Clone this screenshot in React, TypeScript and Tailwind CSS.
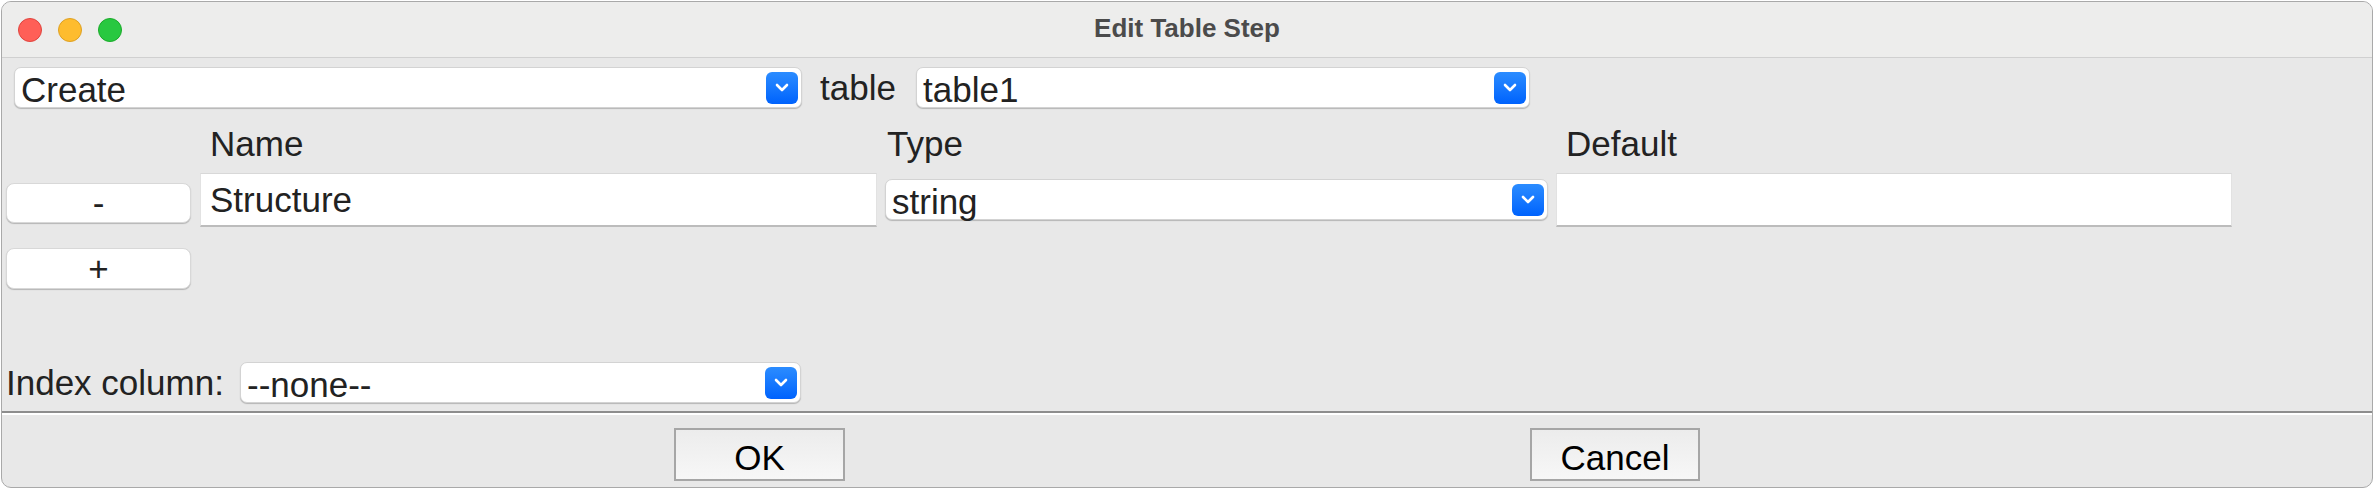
import React from "react";

function Chevron() {
    return (
        <svg width="14" height="9" viewBox="0 0 14 9" fill="none">
            <path d="M2 2l5 5 5-5" stroke="white" strokeWidth="2.6" strokeLinecap="round" strokeLinejoin="round" />
        </svg>
    )
}

function Select({ value, className }: { value: string; className: string }) {
    return (
        <div className={`flex h-[41px] shrink-0 items-center justify-between rounded-[7px] border border-[#d3d3d3] bg-white pl-[6px] pr-[3px] shadow-[0_1px_1px_rgba(0,0,0,0.22)] ${className}`}>
            <span className="pt-[4px] leading-[37px]">{value}</span>
            <span className="flex h-[32px] w-[32px] items-center justify-center rounded-[6px] bg-linear-to-b from-[#2b8cff] to-[#0062fd]">
                <Chevron />
            </span>
        </div>
    )
}

function TextField({ value, className }: { value?: string; className: string }) {
    return (
        <div className={`h-[54px] shrink-0 border-x border-t border-b-2 border-x-[#e2e2e2] border-t-[#d8d8d8] border-b-[#bcbcbc] bg-white pl-[9px] leading-[51px] ${className}`}>
            {value}
        </div>
    )
}

function SmallButton({ label, className }: { label: string; className: string }) {
    return (
        <div className={`flex w-[185px] shrink-0 items-center justify-center rounded-[8px] border border-[#d8d8d8] bg-white shadow-[0_1px_1px_rgba(0,0,0,0.22)] leading-[38px] ${className}`}>
            {label}
        </div>
    )
}

function DialogButton({ label, className }: { label: string; className: string }) {
    return (
        <div className={`h-[53px] shrink-0 border-2 border-[#a6a6a6] bg-linear-to-b from-[#ececec] to-[#f7f7f7] pt-[6px] text-center leading-[43px] text-black ${className}`}>
            {label}
        </div>
    )
}

export default function App() {
    return (
        <div className="h-[488px] w-[2376px] bg-white pl-px pt-px font-['Liberation_Sans',Arial,sans-serif] text-[35px] text-[#222222]">
            <div className="flex h-[487px] w-[2372px] flex-col overflow-hidden rounded-[10px] border border-[#a9a9a9] bg-[#e8e8e8]">

                {/* title bar */}
                <div className="grid h-[56px] shrink-0 grid-cols-[1fr_auto_1fr] items-center border-b border-[#d0d0d0] bg-[#ededec] px-[16px]">
                    <div className="flex gap-[16px]">
                        <span className="h-[24px] w-[24px] rounded-full border border-[#e0443e] bg-[#ff5f57]" />
                        <span className="h-[24px] w-[24px] rounded-full border border-[#dea123] bg-[#febc2e]" />
                        <span className="h-[24px] w-[24px] rounded-full border border-[#1aab29] bg-[#28c840]" />
                    </div>
                    <div className="pb-[2px] text-[26px] font-bold text-[#4b4b4b]">Edit Table Step</div>
                    <div />
                </div>

                {/* operation + table */}
                <div className="mt-[9px] flex items-center pl-[12px]">
                    <Select value="Create" className="w-[788px]" />
                    <span className="ml-[18px] w-[96px] shrink-0 leading-[40px]">table</span>
                    <Select value="table1" className="w-[614px]" />
                </div>

                {/* column headers */}
                <div className="mt-[16px] flex h-[40px] pl-[4px] leading-[40px]">
                    <div className="w-[194px] shrink-0" />
                    <div className="w-[685px] shrink-0 pl-[10px]">Name</div>
                    <div className="w-[671px] shrink-0 pl-[2px]">Type</div>
                    <div className="pl-[10px]">Default</div>
                </div>

                {/* column row */}
                <div className="mt-[9px] flex items-start pl-[4px]">
                    <SmallButton label="-" className="mt-[10px] h-[40px]" />
                    <TextField value="Structure" className="ml-[9px] w-[677px]" />
                    <Select value="string" className="ml-[8px] mt-[6px] w-[663px]" />
                    <TextField className="ml-[8px] w-[676px]" />
                </div>

                <div className="mt-[21px] flex pl-[4px]">
                    <SmallButton label="+" className="h-[41px]" />
                </div>

                {/* index column */}
                <div className="mt-[73px] flex items-center pl-[4px]">
                    <span className="w-[234px] shrink-0 leading-[40px]">Index column:</span>
                    <Select value="--none--" className="w-[561px]" />
                </div>

                <div className="mt-[8px] h-[4px] shrink-0 border-t-2 border-b-2 border-t-[#8d8d8d] border-b-white" />

                <div className="mt-[13px] flex pl-[672px]">
                    <DialogButton label="OK" className="w-[171px]" />
                    <DialogButton label="Cancel" className="ml-[685px] w-[170px]" />
                </div>
            </div>
        </div>
    )
}
